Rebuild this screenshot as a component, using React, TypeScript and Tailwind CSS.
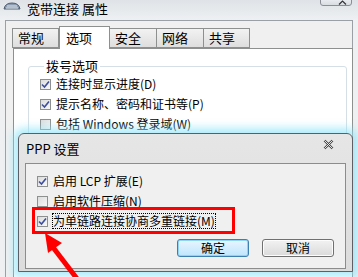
import React from 'react';

const font = { fontFamily: '"Noto Sans CJK SC", "Noto Sans", sans-serif' };

function Check({ checked }: { checked: boolean }) {
  return (
    <span className="w-[11px] h-[11px] shrink-0 border border-[#8e8f8f] bg-gradient-to-br from-[#dcdcdc] to-[#f8f8f8] flex items-center justify-center">
      {checked && (
        <svg width="9" height="9" viewBox="0 0 9 9">
          <path d="M1 4.5 L3.5 7 L8 1.5" fill="none" stroke="#3d4f9c" strokeWidth="1.6" />
        </svg>
      )}
    </span>
  );
}

function Row({ checked, children }: { checked: boolean; children: React.ReactNode }) {
  return (
    <div className="h-[20px] flex items-center gap-[5px] text-[12px] text-black whitespace-nowrap">
      <Check checked={checked} />
      {children}
    </div>
  );
}

function Tab({ label, w, active }: { label: string; w: string; active?: boolean }) {
  if (active) {
    return (
      <div className={`${w} h-[23px] -mb-px bg-white border border-b-0 border-[#8e8f8f] text-[13px] flex items-start pl-[6px] pt-[1px] z-10`}>
        {label}
      </div>
    );
  }
  return (
    <div className={`${w} h-[20px] bg-gradient-to-b from-[#f2f2f2] to-[#dedede] border border-[#8e8f8f] -ml-px text-[13px] flex items-center pl-[5px]`}>
      {label}
    </div>
  );
}

export default function App() {
  return (
    <div className="relative w-[358px] h-[277px] overflow-hidden bg-[#eef0f2]" style={font}>
      {/* title bar */}
      <div className="h-[20px] flex items-start bg-gradient-to-b from-[#dfe3e7] to-[#eef0f2]">
        <svg width="20" height="12" viewBox="0 0 20 12" className="ml-[2px] mt-[1px]">
          <path d="M2 8 Q3 2 10 2 Q17 2 18 8 Z" fill="#8a9bb0" stroke="#4d5c70" strokeWidth="1" />
          <path d="M5 5 H15 M4 7 H16" stroke="#dfe6ee" strokeWidth="1" />
        </svg>
        <span className="ml-[5px] mt-px text-[13px] leading-[16px] text-black">宽带连接 属性</span>
        <div className="ml-auto mr-[6px] -mt-px w-[32px] h-[7px] border border-[#8a8f96] rounded-b-[3px] bg-gradient-to-b from-[#e8ecf0] to-[#d8dde2] flex justify-end pr-[4px]">
          <svg width="9" height="5" viewBox="0 0 9 5">
            <path d="M1 4.5 L4.5 1 L8 4.5" fill="none" stroke="#333" strokeWidth="1.2" />
          </svg>
        </div>
      </div>

      {/* properties body */}
      <div className="ml-[5px] w-[348px] h-[257px] border-l border-t border-r border-[#9aa0a6] bg-[#f0f0f0] pt-[6px] pl-[7px]">
        <div className="flex items-end h-[21px]">
          <Tab label="常规" w="w-[47px]" />
          <Tab label="选项" w="w-[51px]" active />
          <Tab label="安全" w="w-[48px]" />
          <Tab label="网络" w="w-[48px]" />
          <Tab label="共享" w="w-[47px]" />
        </div>
        <div className="w-[340px] h-[230px] bg-white border border-[#8e8f8f] pt-[10px] pl-[14px]">
          <fieldset className="w-[319px] h-[120px] border border-[#d5dfe5] rounded-[3px] pl-[11px] pt-[1px]">
            <legend className="ml-[4px] px-[2px] text-[13px] leading-[14px]">拨号选项</legend>
            <Row checked>连接时显示进度(D)</Row>
            <Row checked>提示名称、密码和证书等(P)</Row>
            <Row checked={false}>包括 Windows 登录域(W)</Row>
          </fieldset>
        </div>
      </div>

      {/* PPP dialog */}
      <div className="absolute left-[18px] top-[133px] w-[335px] h-[139px] rounded-t-[6px] border border-[#5c6066] bg-gradient-to-b from-[#e6e6e6] to-[#dcdcdc] shadow-[0_0_9px_5px_rgba(140,228,248,0.7)] flex flex-col">
        <div className="h-[29px] flex items-center pl-[7px] pr-[18px]">
          <span className="text-[13px] text-black">PPP 设置</span>
          <svg width="11" height="11" viewBox="0 0 11 11" className="ml-auto -mt-[8px]">
            <path d="M1.5 1.5 L9.5 9.5 M9.5 1.5 L1.5 9.5" stroke="#444" strokeWidth="2.4" />
            <path d="M1.5 1.5 L9.5 9.5 M9.5 1.5 L1.5 9.5" stroke="#f4f4f4" strokeWidth="0.9" />
          </svg>
        </div>
        <div className="mx-[6px] h-[106px] bg-[#f0f0f0] border border-[#8c8c8c] pt-[7px] pl-[11px] pr-[11px] flex flex-col">
          <Row checked>启用 LCP 扩展(E)</Row>
          <Row checked={false}>启用软件压缩(N)</Row>
          <Row checked>
            <span className="outline outline-1 outline-dotted outline-black leading-[14px]">为单链路连接协商多重链接(M)</span>
          </Row>
          <div className="mt-[8px] flex justify-end gap-[13px]">
            <button className="w-[72px] h-[18px] rounded-[3px] border border-[#3c7fb1] bg-gradient-to-b from-[#e8f6fd] to-[#bee6fd] shadow-[inset_0_0_0_1px_#8fd3f6] text-[12px] leading-none text-black">
              确定
            </button>
            <button className="w-[72px] h-[18px] rounded-[3px] border border-[#707070] bg-gradient-to-b from-[#f2f2f2] to-[#dadada] shadow-[inset_0_0_0_1px_#fcfcfc] text-[12px] leading-none text-black">
              取消
            </button>
          </div>
        </div>
      </div>

      {/* red highlight */}
      <div className="absolute left-[32px] top-[207px] w-[203px] h-[27px] border-[3px] border-[#ff0000]" />

      {/* red arrow */}
      <svg className="absolute left-0 top-0" width="358" height="277" viewBox="0 0 358 277">
        <path d="M78 280 L52 246" stroke="#ff0000" strokeWidth="5" />
        <polygon points="45,233 62,243 48,253" fill="#ff0000" />
      </svg>
    </div>
  );
}
